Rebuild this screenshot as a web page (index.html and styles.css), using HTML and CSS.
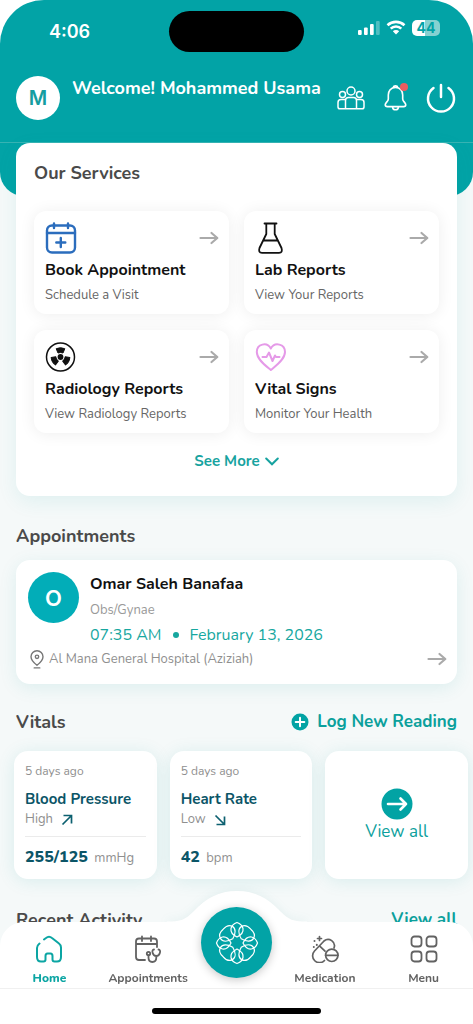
FILE: index.html
```html
<!DOCTYPE html>
<html lang="en">
<head>
<meta charset="utf-8">
<meta name="viewport" content="width=device-width, initial-scale=1">
<title>Patient Home</title>
<link rel="stylesheet" href="styles.css">
</head>
<body>
<svg class="defs" aria-hidden="true">
  <symbol id="arrow" viewBox="0 0 20 14"><path d="M1.500 7H18M12.500 2L18.300 7L12.500 12" fill="none" stroke="currentColor" stroke-width="2.200" stroke-linecap="round" stroke-linejoin="round"/></symbol>
</svg>
<div class="app">
  <header class="header">
    <div class="status">
      <time class="clock">4:06</time>
      <span class="island"></span>
      <span class="signals">
        <svg width="22" height="14" viewBox="0 0 22 14" fill="#fff"><rect x="0" y="9" width="3.700" height="5" rx="1"/><rect x="6" y="6.500" width="3.700" height="7.500" rx="1"/><rect x="12" y="3" width="3.700" height="11" rx="1"/><rect x="18" y="0" width="3.700" height="14" rx="1" opacity=".3"/></svg>
        <svg width="20" height="15" viewBox="0 0 20 15" fill="none" stroke="#fff" stroke-width="2.600"><path d="M1.500 5.200A12.400 12.400 0 0 1 18.500 5.200"/><path d="M4.700 8.700A7.500 7.500 0 0 1 15.300 8.700"/><path d="M10 14.500L6.800 11.300A4.500 4.500 0 0 1 13.200 11.300Z" fill="#fff" stroke="none"/></svg>
        <span class="battery">44</span>
      </span>
    </div>
    <div class="topbar">
      <span class="avatar avatar-user">M</span>
      <h1 class="welcome">Welcome! Mohammed Usama</h1>
      <div class="actions">
        <button class="icon-btn" aria-label="Family">
          <svg width="28" height="24" viewBox="0 0 28 24" fill="none" stroke="#fff" stroke-width="1.500"><circle cx="14" cy="5" r="4"/><circle cx="5.500" cy="8.500" r="3"/><circle cx="22.500" cy="8.500" r="3"/><path d="M8.500 22.800V14.500Q8.500 11.500 11.500 11.500H16.500Q19.500 11.500 19.500 14.500V22.800"/><path d="M8.500 13.500H4Q1 13.500 1 16.500V21Q1 22.800 3 22.800H25Q27 22.800 27 21V16.500Q27 13.500 24 13.500H19.500"/></svg>
        </button>
        <button class="icon-btn" aria-label="Notifications">
          <svg width="23" height="27" viewBox="0 0 24 28" fill="none" stroke="#fff" stroke-width="1.700" stroke-linejoin="round"><path d="M12 3.500C7 3.500 4.500 7.500 4.500 11.500V15.500C4.500 18 1.300 19.500 1.300 21.500Q1.300 23.500 3.500 23.500H20.500Q22.700 23.500 22.700 21.500C22.700 19.500 19.500 18 19.500 15.500V11.500C19.500 7.500 17 3.500 12 3.500Z"/><path d="M9.500 3.800A2.600 2.600 0 0 1 14.500 3.800M9 23.800A3 3 0 0 0 15 23.800"/></svg>
          <span class="bell-dot"></span>
        </button>
        <button class="icon-btn" aria-label="Log out">
          <svg width="30" height="30" viewBox="0 0 30 30" fill="none" stroke="#fff" stroke-width="2.500" stroke-linecap="round"><path d="M15 2V14M7.500 5A13 13 0 1 0 22.500 5"/></svg>
        </button>
      </div>
    </div>
  </header>

  <main class="content">
    <section class="services">
      <h2 class="heading">Our Services</h2>
      <div class="service-grid">
        <a class="service" href="#book">
          <span class="service-top">
            <svg width="32" height="32" viewBox="0 0 32 32" fill="none" stroke="#2b6dbd" stroke-width="2.400" stroke-linecap="round"><rect x="2" y="3.500" width="28" height="27" rx="5"/><path d="M2 11H30M9 1.500V6M23 1.500V6M15.800 16V25M11.300 20.500H20.300"/></svg>
            <svg class="go" width="20" height="14"><use href="#arrow"/></svg>
          </span>
          <strong class="service-name">Book Appointment</strong>
          <span class="service-note">Schedule a Visit</span>
        </a>
        <a class="service" href="#lab">
          <span class="service-top">
            <svg width="32" height="32" viewBox="0 0 32 32" fill="none" stroke="#111" stroke-width="1.800" stroke-linecap="round" stroke-linejoin="round"><path d="M9.500 1.500H21.500M11.300 1.500V12L4.500 26Q3 30.800 7 30.800H24Q28 30.800 26.500 26L19.700 12V1.500M9 18.500H22.500"/></svg>
            <svg class="go" width="20" height="14"><use href="#arrow"/></svg>
          </span>
          <strong class="service-name">Lab Reports</strong>
          <span class="service-note">View Your Reports</span>
        </a>
        <a class="service" href="#radiology">
          <span class="service-top">
            <svg width="32" height="32" viewBox="0 0 32 32" fill="#111"><circle cx="15.500" cy="16" r="14" fill="none" stroke="#111" stroke-width="1.500"/><circle cx="15.500" cy="16" r="2.900"/><g id="blade"><path d="M11.200 7.700Q15.500 5.700 19.800 7.700L18 12Q15.500 10.900 13 12Z" stroke="#111" stroke-linejoin="round"/></g><use href="#blade" transform="rotate(120 15.500 16)"/><use href="#blade" transform="rotate(240 15.500 16)"/></svg>
            <svg class="go" width="20" height="14"><use href="#arrow"/></svg>
          </span>
          <strong class="service-name">Radiology Reports</strong>
          <span class="service-note">View Radiology Reports</span>
        </a>
        <a class="service" href="#vitals">
          <span class="service-top">
            <svg width="32" height="32" viewBox="0 0 32 32" fill="none" stroke="#e59ae8" stroke-width="2" stroke-linecap="round" stroke-linejoin="round"><path d="M15.800 29C11 25 1.800 18.500 1.800 11C1.800 3 12 .5 15.800 7.500C19.600 .5 30 3 30 11C30 18.500 20.600 25 15.800 29Z"/><path d="M7.500 16H11.500L14 11.500L17.500 20L20 14.500L21 16H24.500"/></svg>
            <svg class="go" width="20" height="14"><use href="#arrow"/></svg>
          </span>
          <strong class="service-name">Vital Signs</strong>
          <span class="service-note">Monitor Your Health</span>
        </a>
      </div>
      <button class="see-more">See More <svg width="14" height="9" viewBox="0 0 14 9" fill="none" stroke="currentColor" stroke-width="2" stroke-linecap="round"><path d="M1.200 1.500L7 7.300L12.800 1.500"/></svg></button>
    </section>

    <section class="block">
      <h2 class="heading">Appointments</h2>
      <a class="appointment" href="#appointment">
        <span class="avatar avatar-doctor">O</span>
        <span class="visit">
          <strong class="doctor">Omar Saleh Banafaa</strong>
          <span class="specialty">Obs/Gynae</span>
          <span class="when"><span>07:35 AM</span><i class="dot"></i><span>February 13, 2026</span></span>
        </span>
        <span class="place">
          <svg width="14" height="19" viewBox="0 0 14 19" fill="none" stroke="#777" stroke-width="1.400" stroke-linecap="round"><path d="M7 15.300C3.500 12.500 1 9.500 1 6.700A6 6 0 0 1 13 6.700C13 9.500 10.500 12.500 7 15.300ZM4.200 17.900H9.800"/><circle cx="7" cy="6.800" r="1.700"/></svg>
          <span>Al Mana General Hospital (Aziziah)</span>
          <svg class="go" width="20" height="14"><use href="#arrow"/></svg>
        </span>
      </a>
    </section>

    <section class="block block-vitals">
      <div class="block-head">
        <h2 class="heading">Vitals</h2>
        <button class="log-new"><svg width="18" height="18" viewBox="0 0 18 18"><circle cx="9" cy="9" r="8.500" fill="#02a3a4"/><path d="M9 4.700V13.300M4.700 9H13.300" stroke="#fff" stroke-width="2" stroke-linecap="round"/></svg>Log New Reading</button>
      </div>
      <div class="vitals">
        <article class="vital">
          <span class="ago">5 days ago</span>
          <strong class="vital-name">Blood Pressure</strong>
          <span class="level">High <svg width="12" height="12" viewBox="0 0 12 12" fill="none" stroke="#0c6070" stroke-width="1.700"><path d="M1.500 10.500L10 2M2.500 1.500H10.500V9.500"/></svg></span>
          <span class="reading"><b>255/125</b> mmHg</span>
        </article>
        <article class="vital">
          <span class="ago">5 days ago</span>
          <strong class="vital-name">Heart Rate</strong>
          <span class="level">Low <svg width="12" height="12" viewBox="0 0 12 12" fill="none" stroke="#0c6070" stroke-width="1.700"><path d="M1.500 1.500L10 10M2.500 10.500H10.500V2.500"/></svg></span>
          <span class="reading"><b>42</b> bpm</span>
        </article>
        <a class="vital vital-all" href="#all-vitals">
          <svg width="32" height="32" viewBox="0 0 32 32" fill="none" stroke="#fff" stroke-width="2.600" stroke-linecap="round" stroke-linejoin="round"><circle cx="16" cy="16" r="15.500" fill="#02a3a4" stroke="none"/><path d="M7 16H25M19.500 10.500L25 16L19.500 21.500"/></svg>
          <span>View all</span>
        </a>
      </div>
    </section>

    <section class="block block-recent">
      <div class="block-head">
        <h2 class="heading">Recent Activity</h2>
        <a class="view-all" href="#activity">View all</a>
      </div>
    </section>
  </main>

  <nav class="nav">
    <svg class="bump" width="140" height="36" viewBox="0 0 140 36" fill="#fff"><path d="M0 30.500C14 30.500 18 29 27 20C39 7 52 0 70 0S101 7 113 20C122 29 126 30.500 140 30.500V36H0Z"/></svg>
    <div class="tabs">
      <a class="tab tab-active" href="#home">
        <svg width="28" height="28" viewBox="0 0 28 28" fill="none" stroke="currentColor" stroke-width="2" stroke-linecap="round" stroke-linejoin="round"><path d="M4.500 8.500Q2 10.500 2 13V22Q2 26.500 6 26.500H8.500Q10.500 26.500 10.500 24.500V21Q10.500 18.500 12.500 18.500H15.500Q17.500 18.500 17.500 21V24.500Q17.500 26.500 19.500 26.500H22Q26 26.500 26 22V12.500Q26 10 24 8.500L17 3Q14 .5 11 3L9 4.500"/></svg>
        <span>Home</span>
      </a>
      <a class="tab" href="#appointments">
        <svg width="28" height="28" viewBox="0 0 28 28" fill="none" stroke="currentColor" stroke-width="1.800" stroke-linecap="round"><path d="M11 25H5Q2 25 2 22V6.500Q2 3.500 5 3.500H20Q23 3.500 23 6.500V12M2 9H23M8 1.500V6M17 1.500V6"/><path d="M20 14.500C17 14.500 18.500 21 22.300 21S27.500 14.500 24.500 14.500M22.300 21V22.500Q22.300 27 18.300 27Q14.500 27 14.500 22.500V20.500"/><circle cx="14.500" cy="18.500" r="1.700"/></svg>
        <span>Appointments</span>
      </a>
      <button class="lotus" aria-label="Care hub">
        <svg width="44" height="44" viewBox="-22 -22 44 44" fill="none" stroke="#fff" stroke-width="1.200">
          <g id="quarter"><path id="petal" d="M0-6C5-8.500 6.500-11.500 6-14.500C5.300-17.500 3-19.500 0-20.500C-3-19.500-5.300-17.500-6-14.500C-6.500-11.500-5-8.500 0-6Z"/><path d="M0-6C6-7.500 9.500-11 8.500-15C7.500-18.500 4-19.800 0-19.500C-4-19.800-7.500-18.500-8.500-15C-9.500-11-6-7.500 0-6Z" transform="rotate(45)"/></g>
          <use href="#quarter" transform="rotate(90)"/><use href="#quarter" transform="rotate(180)"/><use href="#quarter" transform="rotate(270)"/>
        </svg>
      </button>
      <a class="tab" href="#medication">
        <svg width="28" height="28" viewBox="0 0 28 28" fill="none" stroke="currentColor" stroke-width="1.700" stroke-linecap="round"><path d="M13.500 25.500A6.500 6.500 0 0 1 3.500 16L13 6A6.300 6.300 0 0 1 23 13M8.500 10.800L14 16.200"/><circle cx="20.800" cy="20.300" r="6.200"/><path d="M14.600 20.300H27M8.500 1.500V5.500M6.500 3.500H10.500"/><path d="M3.500 6V6.100M5.800 9.800V9.900M2.800 12V12.100" stroke-width="2"/></svg>
        <span>Medication</span>
      </a>
      <a class="tab" href="#menu">
        <svg width="28" height="28" viewBox="0 0 28 28" fill="none" stroke="currentColor" stroke-width="1.800"><rect x="1.500" y="1.500" width="10" height="10" rx="3"/><rect x="16.500" y="1.500" width="10" height="10" rx="3"/><rect x="1.500" y="16.500" width="10" height="10" rx="3"/><rect x="16.500" y="16.500" width="10" height="10" rx="3"/></svg>
        <span>Menu</span>
      </a>
    </div>
    <div class="home-bar"></div>
  </nav>
</div>
</body>
</html>
```
FILE: styles.css
```css
* { box-sizing: border-box; }

body {
  margin: 0;
  background: #fff;
  color: #111;
  font-family: Nunito, Lato, sans-serif;
}

a { color: inherit; text-decoration: none; }
button { margin: 0; padding: 0; border: 0; background: none; color: inherit; font: inherit; cursor: pointer; }
h1, h2 { margin: 0; }
svg { display: block; flex: none; }
.defs { position: absolute; width: 0; height: 0; }

.app {
  min-height: 100vh;
  border-radius: 44px 44px 0 0;
  background: #f5f9f9;
  overflow: hidden;
}

/* Header */
.header {
  padding-bottom: 53px;
  border-radius: 0 0 24px 24px;
  background: linear-gradient(#37b3b3, #37b3b3) 0 142px / 100% 1px no-repeat #02a3a6;
  color: #fff;
}
.status {
  display: grid;
  grid-template-columns: 1fr 135px 1fr;
  align-items: center;
  padding: 11px 33px 0;
}
.clock { padding-left: 16px; font: 600 18px/32px Inter, sans-serif; }
.island { height: 41px; border-radius: 21px; background: #000; }
.signals { display: flex; align-items: center; justify-content: flex-end; gap: 6px; margin-top: -8px; }
.battery {
  width: 28px;
  border-radius: 5px;
  background: linear-gradient(90deg, #fff 45%, #86d1d1 45%);
  color: #02a3a6;
  font: 700 14px/16px Inter, sans-serif;
  text-align: center;
}
.topbar {
  display: flex;
  align-items: center;
  gap: 12px;
  height: 91px;
  padding: 0 17px 0 16px;
}
.avatar {
  display: grid;
  place-items: center;
  border-radius: 50%;
  font-family: Inter, sans-serif;
  font-weight: 600;
}
.avatar-user { width: 44px; height: 44px; background: #fff; color: #159da0; font-size: 20px; }
.welcome { flex: 1; margin-bottom: 19px; font-size: 18px; font-weight: 700; line-height: 22px; white-space: nowrap; }
.actions { display: flex; align-items: center; gap: 19px; }
.icon-btn { position: relative; }
.bell-dot { position: absolute; top: -1px; right: -1px; width: 8px; height: 8px; border-radius: 50%; background: #ee5d60; }

/* Services */
.content { margin-top: -53px; }
.heading { color: #4a4a4a; font-size: 18px; font-weight: 700; line-height: 24px; }
.services {
  margin: 0 16px;
  padding: 18px 18px 24px;
  border-radius: 14px;
  background: #fff;
  box-shadow: 0 6px 20px rgba(0, 150, 150, .09);
}
.service-grid {
  display: grid;
  grid-template-columns: 1fr 1fr;
  gap: 16px 15px;
  margin-top: 26px;
}
.service {
  display: flex;
  flex-direction: column;
  padding: 11px 10px 9px 11px;
  border-radius: 12px;
  background: #fff;
  box-shadow: 0 1px 16px rgba(0, 0, 0, .07);
}
.service-top { display: flex; align-items: center; justify-content: space-between; }
.go { color: #aaa; }
.service-name { margin-top: 4px; font-size: 16px; font-weight: 700; line-height: 24px; }
.service-note { margin-top: 3px; color: #666; font-size: 13px; line-height: 20px; }
.see-more {
  display: flex;
  align-items: center;
  gap: 5px;
  margin: 17px auto 0;
  color: #17a3a0;
  font-size: 15px;
  font-weight: 700;
  line-height: 22px;
}

/* Sections */
.block { padding: 28px 16px 0; }
.block-head { display: flex; align-items: center; justify-content: space-between; }
.appointment {
  display: grid;
  grid-template-columns: 51px 1fr;
  column-gap: 11px;
  margin-top: 12px;
  padding: 11px 10px 14px 12px;
  border-radius: 14px;
  background: #fff;
  box-shadow: 0 4px 18px rgba(0, 150, 150, .1);
}
.avatar-doctor { width: 51px; height: 51px; margin-top: 1px; background: #02adb8; color: #fff; font-size: 22px; }
.visit { display: flex; flex-direction: column; }
.doctor { font-size: 16px; font-weight: 700; line-height: 26px; }
.specialty { margin-top: 1px; color: #999; font-size: 13px; line-height: 24px; }
.when { display: flex; align-items: center; gap: 11px; color: #17a79f; font-size: 16px; line-height: 26px; }
.dot { width: 6px; height: 6px; border-radius: 50%; background: currentColor; }
.place {
  grid-column: 1 / -1;
  display: flex;
  align-items: center;
  gap: 5px;
  padding-left: 2px;
  color: #8f8f8f;
  font-size: 13px;
  line-height: 22px;
}
.place .go { margin-left: auto; }

/* Vitals */
.block-vitals { padding: 26px 0 0; }
.block-vitals .block-head { padding: 0 16px; }
.log-new { display: flex; align-items: center; gap: 8px; color: #0ba09c; font-size: 17px; font-weight: 700; line-height: 24px; }
.vitals { display: flex; gap: 13px; margin-top: 17px; padding: 0 5px 0 14px; }
.vital {
  flex: 1;
  display: flex;
  flex-direction: column;
  min-width: 0;
  padding: 10px 11px 9px;
  border-radius: 14px;
  background: #fff;
  box-shadow: 0 2px 18px rgba(0, 150, 150, .12);
  white-space: nowrap;
}
.ago { color: #8f8f8f; font-size: 12px; line-height: 20px; }
.vital-name { margin-top: 6px; color: #0b5567; font-size: 15px; font-weight: 700; line-height: 24px; }
.level { display: flex; align-items: center; gap: 8px; color: #8f8f8f; font-size: 13px; line-height: 17px; }
.reading { margin-top: 8px; padding-top: 8px; border-top: 1px solid #ebebeb; color: #8f8f8f; font-size: 13px; line-height: 24px; }
.reading b { margin-right: 3px; color: #0b5567; font-size: 16px; font-weight: 800; }
.vital-all { align-items: center; justify-content: center; color: #0ba09c; font-size: 17px; line-height: 24px; }
.block-recent { padding-top: 29px; }
.view-all { color: #0ba09c; font-size: 17px; font-weight: 700; line-height: 24px; }

/* Bottom navigation */
.nav { position: fixed; right: 0; bottom: 0; left: 0; background: linear-gradient(transparent 50%, #fff 50%); }
.bump { position: absolute; bottom: 97px; left: 50%; margin-left: -70px; filter: drop-shadow(0 -2px 4px rgba(0, 120, 120, .06)); }
.tabs {
  position: relative;
  display: grid;
  grid-template-columns: 1fr 1fr 78px 1fr 1fr;
  height: 67px;
  border-bottom: 1px solid #f0f0f0;
  border-radius: 24px 24px 0 0;
  background: #fff;
}
.tab {
  display: flex;
  flex-direction: column;
  align-items: center;
  gap: 6px;
  padding-top: 13px;
  color: #626262;
  font-size: 12px;
  font-weight: 700;
  line-height: 18px;
}
.tab-active { color: #0ba5a3; font-weight: 800; }
.lotus {
  display: grid;
  place-items: center;
  justify-self: center;
  width: 71px;
  height: 71px;
  margin-top: -15px;
  border-radius: 50%;
  background: #02a3a6;
  box-shadow: 0 2px 10px rgba(0, 0, 0, .22);
}
.home-bar { width: 169px; height: 6px; margin: 19px auto 10px; border-radius: 3px; background: #000; }
```
